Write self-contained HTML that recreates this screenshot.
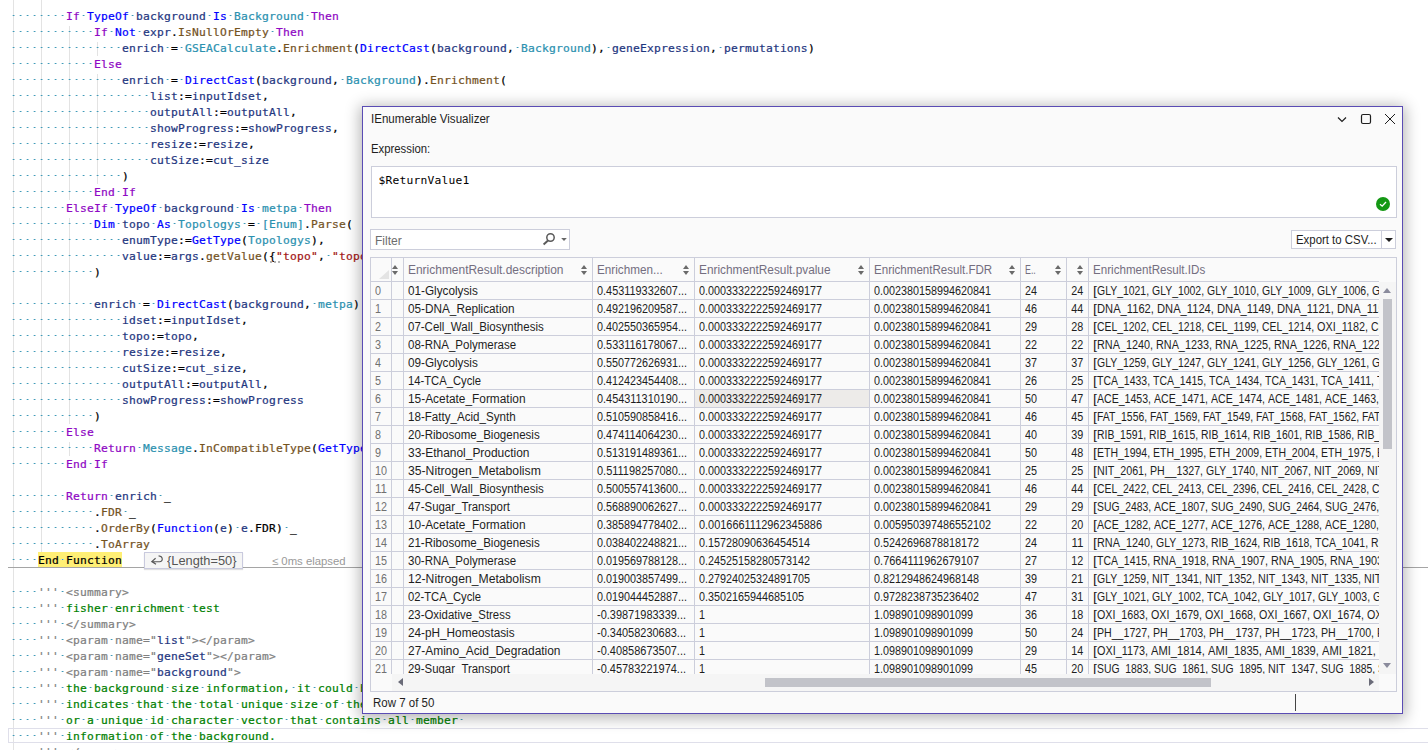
<!DOCTYPE html>
<html lang="en"><head><meta charset="utf-8"><title>IEnumerable Visualizer</title>
<style>
*{box-sizing:border-box}
html,body{margin:0;padding:0}
body{width:1428px;height:750px;overflow:hidden;background:#fff;position:relative;font-family:"Liberation Sans",sans-serif;font-size:12px;color:#1e1e1e}
#ed{position:absolute;left:0;top:0;width:1428px;height:750px;overflow:hidden;background:#fff}
.gd{position:absolute;width:1px;background:#e3e3e3}
#code{position:absolute;left:10px;top:9px;font-family:"DejaVu Sans Mono","Liberation Mono",monospace;font-size:11.3px;letter-spacing:.1968px;line-height:16px;color:#000;-webkit-text-stroke:.22px}
.ln{height:16px;white-space:pre}
.w{background:linear-gradient(90deg,transparent 2px,#c4e0ea 2px,#c4e0ea 3px,#3f9bb8 3px,#3f9bb8 4px,#a3cfde 4px,#a3cfde 5px,transparent 5px) 0 5px/7px 1px repeat-x}
.c{color:#8f08c4}.k{color:#0000ff}.t{color:#2b91af}.m{color:#74531f}.v{color:#1f377f}.s{color:#a31515}
.g{color:#808080}.d{color:#008000}.q{color:#74531f}.bk{color:#000}
.hl{color:#000}
#hl{position:absolute;left:38px;top:552px;width:84px;height:15px;background:#ffef75}
#sep{position:absolute;left:8px;right:0;top:567px;height:1px;background:#a5a5a5}
#cur{position:absolute;left:8px;right:-2px;top:728px;height:15px;border:1px solid #dfdfea}
#tip{position:absolute;left:144px;top:552px;width:99px;height:17px;border:1px solid #c9cade;background:#f5f5f5;color:#555;white-space:nowrap;box-shadow:0 1px 1px rgba(0,0,0,.12)}
#tip svg{position:absolute;left:5px;top:1px}
#tip .tx{position:absolute;left:22px;top:0px;font-size:13px;line-height:16px}
#el{position:absolute;left:272px;top:553px;color:#9a9a9a;font-size:11px;line-height:16px;white-space:nowrap}

#dlg{position:absolute;left:362px;top:106px;width:1041px;height:608px;background:#fafafa;border:1px solid #5a4cb4;box-shadow:0 2px 14px 2px rgba(0,0,0,.30)}
#dlg .abs{position:absolute}
#title{left:8px;top:5px;line-height:14px;white-space:nowrap;color:#1e1e1e}
#expl{left:8px;top:35px;line-height:14px;white-space:nowrap}
#expr{left:8px;top:59px;width:1026px;height:52px;background:#fff;border:1px solid #cccedb}
#expr .tx{position:absolute;left:6.5px;top:7px;font-family:"DejaVu Sans Mono","Liberation Mono",monospace;font-size:11.3px;letter-spacing:.1968px;line-height:14px;color:#000}
#ok{position:absolute;left:1004px;top:30px;width:14px;height:14px}
#filter{left:7px;top:122px;width:200px;height:21px;background:#fff;border:1px solid #cccedb}
#filter .tx{position:absolute;left:3.5px;top:3.5px;line-height:15px;color:#6d6d6d}
#filter svg{position:absolute;left:170px;top:2px}
#export{left:928px;top:123px;width:105px;height:19px;background:#fff;border:1px solid #cccedb}
#export .tx{position:absolute;left:4px;top:2px;line-height:15px;color:#1e1e1e;white-space:nowrap}
#export .dv{position:absolute;left:89px;top:0;width:1px;height:17px;background:#cccedb}
#export .ar{position:absolute;left:93px;top:7px;width:0;height:0;border-left:4px solid transparent;border-right:4px solid transparent;border-top:4px solid #1e1e1e}

#tbl{left:7px;top:150px;width:1027px;height:435px;border:1px solid #cccedb;background:#fafafa;overflow:hidden}
#grid{position:absolute;left:0;top:0;width:1008px;height:416px;overflow:hidden}
.hc{position:absolute;top:0;height:24px;border-right:1px solid #cccedb;border-bottom:1px solid #cccedb;color:#746e80;overflow:hidden;white-space:nowrap}
.hc .ht{position:absolute;left:4px;top:5px;line-height:15px}
.sort{position:absolute;right:4px;top:7px;width:7px;height:10px}
.sort:before{content:"";position:absolute;left:0;top:0;border-left:3.5px solid transparent;border-right:3.5px solid transparent;border-bottom:4px solid #6a6a6a}
.sort:after{content:"";position:absolute;left:0;top:6px;border-left:3.5px solid transparent;border-right:3.5px solid transparent;border-top:4px solid #6a6a6a}
.corner{position:absolute;left:8px;top:12px;width:0;height:0;border-left:10px solid transparent;border-bottom:9px solid #e4e4e4}
.row{position:absolute;left:0;width:1026px;height:18px}
.cell{position:absolute;top:0;height:18px;border-right:1px solid #cccedb;border-bottom:1px solid #cccedb;overflow:hidden;white-space:nowrap;color:#1e1e1e}
.ct{position:absolute;left:4px;top:2px;line-height:15px;white-space:pre}
.f{display:inline-block;transform-origin:0 50%;white-space:pre}
.it{display:inline-block;white-space:pre;vertical-align:top}
.c0{color:#717171}
.c0 .ct{left:4px}
.c7 .ct{left:auto;right:5px}
.sel{background:#edebe9}
#vsb{position:absolute;left:1008px;top:24px;width:17px;height:392px;background:#f5f5f5}
#vsb .th{position:absolute;left:4px;top:17px;width:9px;height:150px;background:#c2c3c9}
.tri{position:absolute;width:0;height:0}
#hsb{position:absolute;left:21px;top:416px;width:987px;height:17px;background:#f5f5f5}
#hsb .th{position:absolute;left:373px;top:4px;width:446px;height:9px;background:#c2c3c9}
#status{left:9.5px;top:589px;line-height:15px;white-space:nowrap}
#caret{left:932px;top:587px;width:1px;height:17px;background:#444}

#sug{position:absolute;left:270px;top:261px;width:10px;height:2px;background:linear-gradient(90deg,#b4b4b4 2px,transparent 2px) 0 0/4px 2px repeat-x;z-index:3}

</style></head>
<body>
<div id="ed">
<div class="gd" style="left:13px;top:0;height:750px"></div>
<div class="gd" style="left:41px;top:0;height:552px"></div>
<div class="gd" style="left:69px;top:26px;height:174px"></div>
<div class="gd" style="left:69px;top:218px;height:206px"></div>
<div class="gd" style="left:69px;top:442px;height:14px"></div>
<div class="gd" style="left:97px;top:42px;height:14px"></div>
<div class="gd" style="left:97px;top:74px;height:110px"></div>
<div id="sep"></div>
<div id="hl"></div>
<div id="sug"></div>
<div id="cur"></div>
<div id="code">
<div class="ln"><span class="w">        </span><span class="c">If</span><span class="w"> </span><span class="k">TypeOf</span><span class="w"> </span><span class="v">background</span><span class="w"> </span><span class="k">Is</span><span class="w"> </span><span class="t">Background</span><span class="w"> </span><span class="c">Then</span></div>
<div class="ln"><span class="w">            </span><span class="c">If</span><span class="w"> </span><span class="k">Not</span><span class="w"> </span><span class="v">expr</span>.<span class="m">IsNullOrEmpty</span><span class="w"> </span><span class="c">Then</span></div>
<div class="ln"><span class="w">                </span><span class="v">enrich</span><span class="w"> </span>=<span class="w"> </span><span class="t">GSEACalculate</span>.<span class="m">Enrichment</span>(<span class="k">DirectCast</span>(<span class="v">background</span>,<span class="w"> </span><span class="t">Background</span>),<span class="w"> </span><span class="v">geneExpression</span>,<span class="w"> </span><span class="v">permutations</span>)</div>
<div class="ln"><span class="w">            </span><span class="c">Else</span></div>
<div class="ln"><span class="w">                </span><span class="v">enrich</span><span class="w"> </span>=<span class="w"> </span><span class="k">DirectCast</span>(<span class="v">background</span>,<span class="w"> </span><span class="t">Background</span>).<span class="m">Enrichment</span>(</div>
<div class="ln"><span class="w">                    </span><span class="v">list</span>:=<span class="v">inputIdset</span>,</div>
<div class="ln"><span class="w">                    </span><span class="v">outputAll</span>:=<span class="v">outputAll</span>,</div>
<div class="ln"><span class="w">                    </span><span class="v">showProgress</span>:=<span class="v">showProgress</span>,</div>
<div class="ln"><span class="w">                    </span><span class="v">resize</span>:=<span class="v">resize</span>,</div>
<div class="ln"><span class="w">                    </span><span class="v">cutSize</span>:=<span class="v">cut_size</span></div>
<div class="ln"><span class="w">                </span>)</div>
<div class="ln"><span class="w">            </span><span class="c">End</span><span class="w"> </span><span class="c">If</span></div>
<div class="ln"><span class="w">        </span><span class="c">ElseIf</span><span class="w"> </span><span class="k">TypeOf</span><span class="w"> </span><span class="v">background</span><span class="w"> </span><span class="k">Is</span><span class="w"> </span><span class="t">metpa</span><span class="w"> </span><span class="c">Then</span></div>
<div class="ln"><span class="w">            </span><span class="k">Dim</span><span class="w"> </span><span class="v">topo</span><span class="w"> </span><span class="k">As</span><span class="w"> </span><span class="t">Topologys</span><span class="w"> </span>=<span class="w"> </span><span class="t">[Enum]</span>.<span class="m">Parse</span>(</div>
<div class="ln"><span class="w">                </span><span class="v">enumType</span>:=<span class="k">GetType</span>(<span class="t">Topologys</span>),</div>
<div class="ln"><span class="w">                </span><span class="v">value</span>:=<span class="v">args</span>.<span class="m">getValue</span>({<span class="s">"topo"</span>,<span class="w"> </span><span class="s">"topology"</span>}),</div>
<div class="ln"><span class="w">            </span>)</div>
<div class="ln"></div>
<div class="ln"><span class="w">            </span><span class="v">enrich</span><span class="w"> </span>=<span class="w"> </span><span class="k">DirectCast</span>(<span class="v">background</span>,<span class="w"> </span><span class="t">metpa</span>).<span class="m">Enrichment</span>(</div>
<div class="ln"><span class="w">                </span><span class="v">idset</span>:=<span class="v">inputIdset</span>,</div>
<div class="ln"><span class="w">                </span><span class="v">topo</span>:=<span class="v">topo</span>,</div>
<div class="ln"><span class="w">                </span><span class="v">resize</span>:=<span class="v">resize</span>,</div>
<div class="ln"><span class="w">                </span><span class="v">cutSize</span>:=<span class="v">cut_size</span>,</div>
<div class="ln"><span class="w">                </span><span class="v">outputAll</span>:=<span class="v">outputAll</span>,</div>
<div class="ln"><span class="w">                </span><span class="v">showProgress</span>:=<span class="v">showProgress</span></div>
<div class="ln"><span class="w">            </span>)</div>
<div class="ln"><span class="w">        </span><span class="c">Else</span></div>
<div class="ln"><span class="w">            </span><span class="c">Return</span><span class="w"> </span><span class="t">Message</span>.<span class="m">InCompatibleType</span>(<span class="k">GetType</span>(<span class="t">Background</span>),<span class="w"> </span><span class="v">env</span>)</div>
<div class="ln"><span class="w">        </span><span class="c">End</span><span class="w"> </span><span class="c">If</span></div>
<div class="ln"></div>
<div class="ln"><span class="w">        </span><span class="c">Return</span><span class="w"> </span><span class="v">enrich</span><span class="w"> </span>_</div>
<div class="ln"><span class="w">            </span>.<span class="q">FDR</span><span class="w"> </span>_</div>
<div class="ln"><span class="w">            </span>.<span class="m">OrderBy</span>(<span class="k">Function</span>(<span class="v">e</span>)<span class="w"> </span><span class="v">e</span>.<span class="bk">FDR</span>)<span class="w"> </span>_</div>
<div class="ln"><span class="w">            </span>.<span class="q">ToArray</span></div>
<div class="ln"><span class="w">    </span><span class="hl">End<span class="w"> </span>Function</span></div>
<div class="ln"></div>
<div class="ln"><span class="w">    </span><span class="g">'''</span><span class="w"> </span><span class="g">&lt;summary&gt;</span></div>
<div class="ln"><span class="w">    </span><span class="g">'''</span><span class="w"> </span><span class="d">fisher<span class="w"> </span>enrichment<span class="w"> </span>test</span></div>
<div class="ln"><span class="w">    </span><span class="g">'''</span><span class="w"> </span><span class="g">&lt;/summary&gt;</span></div>
<div class="ln"><span class="w">    </span><span class="g">'''</span><span class="w"> </span><span class="g">&lt;param<span class="w"> </span>name="</span><span class="v">list</span><span class="g">"&gt;&lt;/param&gt;</span></div>
<div class="ln"><span class="w">    </span><span class="g">'''</span><span class="w"> </span><span class="g">&lt;param<span class="w"> </span>name="</span><span class="v">geneSet</span><span class="g">"&gt;&lt;/param&gt;</span></div>
<div class="ln"><span class="w">    </span><span class="g">'''</span><span class="w"> </span><span class="g">&lt;param<span class="w"> </span>name="</span><span class="v">background</span><span class="g">"&gt;</span></div>
<div class="ln"><span class="w">    </span><span class="g">'''</span><span class="w"> </span><span class="d">the<span class="w"> </span>background<span class="w"> </span>size<span class="w"> </span>information,<span class="w"> </span>it<span class="w"> </span>could<span class="w"> </span>be<span class="w"> </span>an<span class="w"> </span>integer<span class="w"> </span>value</span></div>
<div class="ln"><span class="w">    </span><span class="g">'''</span><span class="w"> </span><span class="d">indicates<span class="w"> </span>that<span class="w"> </span>the<span class="w"> </span>total<span class="w"> </span>unique<span class="w"> </span>size<span class="w"> </span>of<span class="w"> </span>the<span class="w"> </span>enrichment<span class="w"> </span>background,</span></div>
<div class="ln"><span class="w">    </span><span class="g">'''</span><span class="w"> </span><span class="d">or<span class="w"> </span>a<span class="w"> </span>unique<span class="w"> </span>id<span class="w"> </span>character<span class="w"> </span>vector<span class="w"> </span>that<span class="w"> </span>contains<span class="w"> </span>all<span class="w"> </span>member<span class="w"> </span></span></div>
<div class="ln"><span class="w">    </span><span class="g">'''</span><span class="w"> </span><span class="d">information<span class="w"> </span>of<span class="w"> </span>the<span class="w"> </span>background.</span></div>
<div class="ln"><span class="w">    </span><span class="g">'''</span><span class="w"> </span><span class="g">&lt;/param&gt;</span></div>
</div>
<div id="tip"><svg width="16" height="14" viewBox="0 0 16 14"><path d="M5.6 4.3 L1.8 7.6 L6 10.2 M2.2 7.7 H9.6 C13.2 7.7 13.4 2.4 8.6 1.9" fill="none" stroke="#555" stroke-width="1.15"/></svg><span class="tx"><span class="f" style="transform:scaleX(0.9858)">{Length=50}</span></span></div>
<div id="el"><span class="f" style="transform:scaleX(1.0298)">≤ 0ms elapsed</span></div>
</div>
<div id="dlg">
<div class="abs" id="title"><span class="f" style="transform:scaleX(0.9636)">IEnumerable Visualizer</span></div>
<svg class="abs" style="left:972px;top:4px" width="64" height="16" viewBox="0 0 64 16"><g fill="none" stroke="#1e1e1e" stroke-width="1.2"><path d="M3 6.5 L7 10.5 L11 6.5"/><rect x="26.5" y="3.5" width="9" height="9" rx="1.5"/><path d="M50 3 L60 13 M60 3 L50 13" stroke-width="1"/></g></svg>
<div class="abs" id="expl"><span class="f" style="transform:scaleX(0.9441)">Expression:</span></div>
<div class="abs" id="expr"><span class="tx">$ReturnValue1</span>
<svg id="ok" viewBox="0 0 14 14"><circle cx="7" cy="7" r="7" fill="#149814"/><path d="M4 7.2 L6.2 9.2 L10 5" fill="none" stroke="#fff" stroke-width="1.3"/></svg>
</div>
<div class="abs" id="filter"><span class="tx"><span class="f" style="transform:scaleX(1.0048)">Filter</span></span>
<svg width="28" height="16" viewBox="0 0 28 16"><circle cx="9.5" cy="5.5" r="3.7" fill="none" stroke="#5a5a5a" stroke-width="1.5"/><path d="M7 8.6 L2.6 12.4" stroke="#5a5a5a" stroke-width="2" fill="none"/><path d="M20.2 6 L25.8 6 L23 9 Z" fill="#666"/></svg>
</div>
<div class="abs" id="export"><span class="tx"><span class="f" style="transform:scaleX(0.9501)">Export to CSV...</span></span><span class="dv"></span><span class="ar"></span></div>
<div class="abs" id="tbl">
<div id="grid">
<div class="hc" style="left:0px;width:21px"><span class="corner"></span></div>
<div class="hc" style="left:21px;width:12px"><span class="sort"></span></div>
<div class="hc" style="left:33px;width:189px"><span class="ht"><span class="f" style="transform:scaleX(0.9963)">EnrichmentResult.description</span></span><span class="sort"></span></div>
<div class="hc" style="left:222px;width:102px"><span class="ht"><span class="f" style="transform:scaleX(0.9754)">Enrichmen...</span></span><span class="sort"></span></div>
<div class="hc" style="left:324px;width:175px"><span class="ht"><span class="f" style="transform:scaleX(0.9857)">EnrichmentResult.pvalue</span></span><span class="sort"></span></div>
<div class="hc" style="left:499px;width:151px"><span class="ht"><span class="f" style="transform:scaleX(0.9633)">EnrichmentResult.FDR</span></span><span class="sort"></span></div>
<div class="hc" style="left:650px;width:46px"><span class="ht"><span class="f" style="transform:scaleX(0.7361)">E..</span></span><span class="sort"></span></div>
<div class="hc" style="left:696px;width:22px"><span class="sort"></span></div>
<div class="hc" style="left:718px;width:308px"><span class="ht"><span class="f" style="transform:scaleX(0.9669)">EnrichmentResult.IDs</span></span></div>
<div class="row" style="top:24px">
<div class="cell c0" style="left:0px;width:21px"><span class="ct"><span class="f" style="transform:scaleX(0.8972)">0</span></span></div>
<div class="cell c1" style="left:21px;width:12px"><span class="ct"></span></div>
<div class="cell c2" style="left:33px;width:189px"><span class="ct"><span class="f" style="transform:scaleX(0.9781)">01-Glycolysis</span></span></div>
<div class="cell c3" style="left:222px;width:102px"><span class="ct"><span class="f" style="transform:scaleX(0.9071)">0.453119332607...</span></span></div>
<div class="cell c4" style="left:324px;width:175px"><span class="ct"><span class="f" style="transform:scaleX(0.8990)">0.0003332222592469177</span></span></div>
<div class="cell c5" style="left:499px;width:151px"><span class="ct"><span class="f" style="transform:scaleX(0.8990)">0.002380158994620841</span></span></div>
<div class="cell c6" style="left:650px;width:46px"><span class="ct"><span class="f" style="transform:scaleX(0.8982)">24</span></span></div>
<div class="cell c7" style="left:696px;width:22px"><span class="ct"><span class="f" style="transform:scaleX(0.8982);transform-origin:100% 50%">24</span></span></div>
<div class="cell c8" style="left:718px;width:308px"><span class="ct"><span class="it" style="width:4px"><span class="f" style="transform:scaleX(1.1963)">[</span></span><span class="it" style="width:55px"><span class="f" style="transform:scaleX(0.8706)">GLY_1021, </span></span><span class="it" style="width:55px"><span class="f" style="transform:scaleX(0.8706)">GLY_1002, </span></span><span class="it" style="width:55px"><span class="f" style="transform:scaleX(0.8706)">GLY_1010, </span></span><span class="it" style="width:55px"><span class="f" style="transform:scaleX(0.8706)">GLY_1009, </span></span><span class="it" style="width:55px"><span class="f" style="transform:scaleX(0.8706)">GLY_1006, </span></span><span class="it" style="width:55px"><span class="f" style="transform:scaleX(0.8706)">GLY_1013, </span></span><span class="it" style="width:55px"><span class="f" style="transform:scaleX(0.8706)">GLY_1003, </span></span></span></div>
</div>
<div class="row" style="top:42px">
<div class="cell c0" style="left:0px;width:21px"><span class="ct"><span class="f" style="transform:scaleX(0.8972)">1</span></span></div>
<div class="cell c1" style="left:21px;width:12px"><span class="ct"></span></div>
<div class="cell c2" style="left:33px;width:189px"><span class="ct"><span class="f" style="transform:scaleX(0.9804)">05-DNA_Replication</span></span></div>
<div class="cell c3" style="left:222px;width:102px"><span class="ct"><span class="f" style="transform:scaleX(0.8990)">0.492196209587...</span></span></div>
<div class="cell c4" style="left:324px;width:175px"><span class="ct"><span class="f" style="transform:scaleX(0.8990)">0.0003332222592469177</span></span></div>
<div class="cell c5" style="left:499px;width:151px"><span class="ct"><span class="f" style="transform:scaleX(0.8990)">0.002380158994620841</span></span></div>
<div class="cell c6" style="left:650px;width:46px"><span class="ct"><span class="f" style="transform:scaleX(0.8982)">46</span></span></div>
<div class="cell c7" style="left:696px;width:22px"><span class="ct"><span class="f" style="transform:scaleX(0.8982);transform-origin:100% 50%">44</span></span></div>
<div class="cell c8" style="left:718px;width:308px"><span class="ct"><span class="it" style="width:4px"><span class="f" style="transform:scaleX(1.1963)">[</span></span><span class="it" style="width:60px"><span class="f" style="transform:scaleX(0.9305)">DNA_1162, </span></span><span class="it" style="width:60px"><span class="f" style="transform:scaleX(0.9305)">DNA_1124, </span></span><span class="it" style="width:60px"><span class="f" style="transform:scaleX(0.9305)">DNA_1149, </span></span><span class="it" style="width:60px"><span class="f" style="transform:scaleX(0.9305)">DNA_1121, </span></span><span class="it" style="width:60px"><span class="f" style="transform:scaleX(0.9305)">DNA_1158, </span></span><span class="it" style="width:60px"><span class="f" style="transform:scaleX(0.9305)">DNA_1133, </span></span></span></div>
</div>
<div class="row" style="top:60px">
<div class="cell c0" style="left:0px;width:21px"><span class="ct"><span class="f" style="transform:scaleX(0.8972)">2</span></span></div>
<div class="cell c1" style="left:21px;width:12px"><span class="ct"></span></div>
<div class="cell c2" style="left:33px;width:189px"><span class="ct"><span class="f" style="transform:scaleX(0.9582)">07-Cell_Wall_Biosynthesis</span></span></div>
<div class="cell c3" style="left:222px;width:102px"><span class="ct"><span class="f" style="transform:scaleX(0.8990)">0.402550365954...</span></span></div>
<div class="cell c4" style="left:324px;width:175px"><span class="ct"><span class="f" style="transform:scaleX(0.8990)">0.0003332222592469177</span></span></div>
<div class="cell c5" style="left:499px;width:151px"><span class="ct"><span class="f" style="transform:scaleX(0.8990)">0.002380158994620841</span></span></div>
<div class="cell c6" style="left:650px;width:46px"><span class="ct"><span class="f" style="transform:scaleX(0.8982)">29</span></span></div>
<div class="cell c7" style="left:696px;width:22px"><span class="ct"><span class="f" style="transform:scaleX(0.8982);transform-origin:100% 50%">28</span></span></div>
<div class="cell c8" style="left:718px;width:308px"><span class="ct"><span class="it" style="width:4px"><span class="f" style="transform:scaleX(1.1963)">[</span></span><span class="it" style="width:55px"><span class="f" style="transform:scaleX(0.8676)">CEL_1202, </span></span><span class="it" style="width:55px"><span class="f" style="transform:scaleX(0.8676)">CEL_1218, </span></span><span class="it" style="width:55px"><span class="f" style="transform:scaleX(0.8800)">CEL_1199, </span></span><span class="it" style="width:55px"><span class="f" style="transform:scaleX(0.8676)">CEL_1214, </span></span><span class="it" style="width:54px"><span class="f" style="transform:scaleX(0.9026)">OXI_1182, </span></span><span class="it" style="width:55px"><span class="f" style="transform:scaleX(0.8676)">CEL_1207, </span></span><span class="it" style="width:55px"><span class="f" style="transform:scaleX(0.8800)">CEL_1211, </span></span></span></div>
</div>
<div class="row" style="top:78px">
<div class="cell c0" style="left:0px;width:21px"><span class="ct"><span class="f" style="transform:scaleX(0.8972)">3</span></span></div>
<div class="cell c1" style="left:21px;width:12px"><span class="ct"></span></div>
<div class="cell c2" style="left:33px;width:189px"><span class="ct"><span class="f" style="transform:scaleX(0.9590)">08-RNA_Polymerase</span></span></div>
<div class="cell c3" style="left:222px;width:102px"><span class="ct"><span class="f" style="transform:scaleX(0.9071)">0.533116178067...</span></span></div>
<div class="cell c4" style="left:324px;width:175px"><span class="ct"><span class="f" style="transform:scaleX(0.8990)">0.0003332222592469177</span></span></div>
<div class="cell c5" style="left:499px;width:151px"><span class="ct"><span class="f" style="transform:scaleX(0.8990)">0.002380158994620841</span></span></div>
<div class="cell c6" style="left:650px;width:46px"><span class="ct"><span class="f" style="transform:scaleX(0.8982)">22</span></span></div>
<div class="cell c7" style="left:696px;width:22px"><span class="ct"><span class="f" style="transform:scaleX(0.8982);transform-origin:100% 50%">22</span></span></div>
<div class="cell c8" style="left:718px;width:308px"><span class="ct"><span class="it" style="width:4px"><span class="f" style="transform:scaleX(1.1963)">[</span></span><span class="it" style="width:59px"><span class="f" style="transform:scaleX(0.9025)">RNA_1240, </span></span><span class="it" style="width:59px"><span class="f" style="transform:scaleX(0.9025)">RNA_1233, </span></span><span class="it" style="width:59px"><span class="f" style="transform:scaleX(0.9025)">RNA_1225, </span></span><span class="it" style="width:59px"><span class="f" style="transform:scaleX(0.9025)">RNA_1226, </span></span><span class="it" style="width:59px"><span class="f" style="transform:scaleX(0.9025)">RNA_1229, </span></span><span class="it" style="width:59px"><span class="f" style="transform:scaleX(0.9025)">RNA_1237, </span></span></span></div>
</div>
<div class="row" style="top:96px">
<div class="cell c0" style="left:0px;width:21px"><span class="ct"><span class="f" style="transform:scaleX(0.8972)">4</span></span></div>
<div class="cell c1" style="left:21px;width:12px"><span class="ct"></span></div>
<div class="cell c2" style="left:33px;width:189px"><span class="ct"><span class="f" style="transform:scaleX(0.9781)">09-Glycolysis</span></span></div>
<div class="cell c3" style="left:222px;width:102px"><span class="ct"><span class="f" style="transform:scaleX(0.8990)">0.550772626931...</span></span></div>
<div class="cell c4" style="left:324px;width:175px"><span class="ct"><span class="f" style="transform:scaleX(0.8990)">0.0003332222592469177</span></span></div>
<div class="cell c5" style="left:499px;width:151px"><span class="ct"><span class="f" style="transform:scaleX(0.8990)">0.002380158994620841</span></span></div>
<div class="cell c6" style="left:650px;width:46px"><span class="ct"><span class="f" style="transform:scaleX(0.8982)">37</span></span></div>
<div class="cell c7" style="left:696px;width:22px"><span class="ct"><span class="f" style="transform:scaleX(0.8982);transform-origin:100% 50%">37</span></span></div>
<div class="cell c8" style="left:718px;width:308px"><span class="ct"><span class="it" style="width:4px"><span class="f" style="transform:scaleX(1.1963)">[</span></span><span class="it" style="width:55px"><span class="f" style="transform:scaleX(0.8706)">GLY_1259, </span></span><span class="it" style="width:55px"><span class="f" style="transform:scaleX(0.8706)">GLY_1247, </span></span><span class="it" style="width:55px"><span class="f" style="transform:scaleX(0.8706)">GLY_1241, </span></span><span class="it" style="width:55px"><span class="f" style="transform:scaleX(0.8706)">GLY_1256, </span></span><span class="it" style="width:55px"><span class="f" style="transform:scaleX(0.8706)">GLY_1261, </span></span><span class="it" style="width:55px"><span class="f" style="transform:scaleX(0.8706)">GLY_1250, </span></span><span class="it" style="width:55px"><span class="f" style="transform:scaleX(0.8706)">GLY_1244, </span></span></span></div>
</div>
<div class="row" style="top:114px">
<div class="cell c0" style="left:0px;width:21px"><span class="ct"><span class="f" style="transform:scaleX(0.8972)">5</span></span></div>
<div class="cell c1" style="left:21px;width:12px"><span class="ct"></span></div>
<div class="cell c2" style="left:33px;width:189px"><span class="ct"><span class="f" style="transform:scaleX(0.9368)">14-TCA_Cycle</span></span></div>
<div class="cell c3" style="left:222px;width:102px"><span class="ct"><span class="f" style="transform:scaleX(0.8990)">0.412423454408...</span></span></div>
<div class="cell c4" style="left:324px;width:175px"><span class="ct"><span class="f" style="transform:scaleX(0.8990)">0.0003332222592469177</span></span></div>
<div class="cell c5" style="left:499px;width:151px"><span class="ct"><span class="f" style="transform:scaleX(0.8990)">0.002380158994620841</span></span></div>
<div class="cell c6" style="left:650px;width:46px"><span class="ct"><span class="f" style="transform:scaleX(0.8982)">26</span></span></div>
<div class="cell c7" style="left:696px;width:22px"><span class="ct"><span class="f" style="transform:scaleX(0.8982);transform-origin:100% 50%">25</span></span></div>
<div class="cell c8" style="left:718px;width:308px"><span class="ct"><span class="it" style="width:4px"><span class="f" style="transform:scaleX(1.1963)">[</span></span><span class="it" style="width:56px"><span class="f" style="transform:scaleX(0.8744)">TCA_1433, </span></span><span class="it" style="width:56px"><span class="f" style="transform:scaleX(0.8744)">TCA_1415, </span></span><span class="it" style="width:56px"><span class="f" style="transform:scaleX(0.8744)">TCA_1434, </span></span><span class="it" style="width:56px"><span class="f" style="transform:scaleX(0.8744)">TCA_1431, </span></span><span class="it" style="width:56px"><span class="f" style="transform:scaleX(0.8867)">TCA_1411, </span></span><span class="it" style="width:56px"><span class="f" style="transform:scaleX(0.8744)">TCA_1420, </span></span><span class="it" style="width:56px"><span class="f" style="transform:scaleX(0.8744)">TCA_1428, </span></span></span></div>
</div>
<div class="row" style="top:132px">
<div class="cell c0" style="left:0px;width:21px"><span class="ct"><span class="f" style="transform:scaleX(0.8972)">6</span></span></div>
<div class="cell c1" style="left:21px;width:12px"><span class="ct"></span></div>
<div class="cell c2" style="left:33px;width:189px"><span class="ct"><span class="f" style="transform:scaleX(0.9896)">15-Acetate_Formation</span></span></div>
<div class="cell c3" style="left:222px;width:102px"><span class="ct"><span class="f" style="transform:scaleX(0.9071)">0.454311310190...</span></span></div>
<div class="cell c4 sel" style="left:324px;width:175px"><span class="ct"><span class="f" style="transform:scaleX(0.8990)">0.0003332222592469177</span></span></div>
<div class="cell c5" style="left:499px;width:151px"><span class="ct"><span class="f" style="transform:scaleX(0.8990)">0.002380158994620841</span></span></div>
<div class="cell c6" style="left:650px;width:46px"><span class="ct"><span class="f" style="transform:scaleX(0.8982)">50</span></span></div>
<div class="cell c7" style="left:696px;width:22px"><span class="ct"><span class="f" style="transform:scaleX(0.8982);transform-origin:100% 50%">47</span></span></div>
<div class="cell c8" style="left:718px;width:308px"><span class="ct"><span class="it" style="width:4px"><span class="f" style="transform:scaleX(1.1963)">[</span></span><span class="it" style="width:57px"><span class="f" style="transform:scaleX(0.8807)">ACE_1453, </span></span><span class="it" style="width:57px"><span class="f" style="transform:scaleX(0.8807)">ACE_1471, </span></span><span class="it" style="width:57px"><span class="f" style="transform:scaleX(0.8807)">ACE_1474, </span></span><span class="it" style="width:57px"><span class="f" style="transform:scaleX(0.8807)">ACE_1481, </span></span><span class="it" style="width:57px"><span class="f" style="transform:scaleX(0.8807)">ACE_1463, </span></span><span class="it" style="width:57px"><span class="f" style="transform:scaleX(0.8807)">ACE_1459, </span></span><span class="it" style="width:57px"><span class="f" style="transform:scaleX(0.8807)">ACE_1477, </span></span></span></div>
</div>
<div class="row" style="top:150px">
<div class="cell c0" style="left:0px;width:21px"><span class="ct"><span class="f" style="transform:scaleX(0.8972)">7</span></span></div>
<div class="cell c1" style="left:21px;width:12px"><span class="ct"></span></div>
<div class="cell c2" style="left:33px;width:189px"><span class="ct"><span class="f" style="transform:scaleX(0.9667)">18-Fatty_Acid_Synth</span></span></div>
<div class="cell c3" style="left:222px;width:102px"><span class="ct"><span class="f" style="transform:scaleX(0.8990)">0.510590858416...</span></span></div>
<div class="cell c4" style="left:324px;width:175px"><span class="ct"><span class="f" style="transform:scaleX(0.8990)">0.0003332222592469177</span></span></div>
<div class="cell c5" style="left:499px;width:151px"><span class="ct"><span class="f" style="transform:scaleX(0.8990)">0.002380158994620841</span></span></div>
<div class="cell c6" style="left:650px;width:46px"><span class="ct"><span class="f" style="transform:scaleX(0.8982)">46</span></span></div>
<div class="cell c7" style="left:696px;width:22px"><span class="ct"><span class="f" style="transform:scaleX(0.8982);transform-origin:100% 50%">45</span></span></div>
<div class="cell c8" style="left:718px;width:308px"><span class="ct"><span class="it" style="width:4px"><span class="f" style="transform:scaleX(1.1963)">[</span></span><span class="it" style="width:53px"><span class="f" style="transform:scaleX(0.8666)">FAT_1556, </span></span><span class="it" style="width:53px"><span class="f" style="transform:scaleX(0.8666)">FAT_1569, </span></span><span class="it" style="width:53px"><span class="f" style="transform:scaleX(0.8666)">FAT_1549, </span></span><span class="it" style="width:53px"><span class="f" style="transform:scaleX(0.8666)">FAT_1568, </span></span><span class="it" style="width:53px"><span class="f" style="transform:scaleX(0.8666)">FAT_1562, </span></span><span class="it" style="width:53px"><span class="f" style="transform:scaleX(0.8666)">FAT_1553, </span></span><span class="it" style="width:53px"><span class="f" style="transform:scaleX(0.8666)">FAT_1571, </span></span></span></div>
</div>
<div class="row" style="top:168px">
<div class="cell c0" style="left:0px;width:21px"><span class="ct"><span class="f" style="transform:scaleX(0.8972)">8</span></span></div>
<div class="cell c1" style="left:21px;width:12px"><span class="ct"></span></div>
<div class="cell c2" style="left:33px;width:189px"><span class="ct"><span class="f" style="transform:scaleX(0.9631)">20-Ribosome_Biogenesis</span></span></div>
<div class="cell c3" style="left:222px;width:102px"><span class="ct"><span class="f" style="transform:scaleX(0.9071)">0.474114064230...</span></span></div>
<div class="cell c4" style="left:324px;width:175px"><span class="ct"><span class="f" style="transform:scaleX(0.8990)">0.0003332222592469177</span></span></div>
<div class="cell c5" style="left:499px;width:151px"><span class="ct"><span class="f" style="transform:scaleX(0.8990)">0.002380158994620841</span></span></div>
<div class="cell c6" style="left:650px;width:46px"><span class="ct"><span class="f" style="transform:scaleX(0.8982)">40</span></span></div>
<div class="cell c7" style="left:696px;width:22px"><span class="ct"><span class="f" style="transform:scaleX(0.8982);transform-origin:100% 50%">39</span></span></div>
<div class="cell c8" style="left:718px;width:308px"><span class="ct"><span class="it" style="width:4px"><span class="f" style="transform:scaleX(1.1963)">[</span></span><span class="it" style="width:52px"><span class="f" style="transform:scaleX(0.8660)">RIB_1591, </span></span><span class="it" style="width:52px"><span class="f" style="transform:scaleX(0.8660)">RIB_1615, </span></span><span class="it" style="width:52px"><span class="f" style="transform:scaleX(0.8660)">RIB_1614, </span></span><span class="it" style="width:52px"><span class="f" style="transform:scaleX(0.8660)">RIB_1601, </span></span><span class="it" style="width:52px"><span class="f" style="transform:scaleX(0.8660)">RIB_1586, </span></span><span class="it" style="width:52px"><span class="f" style="transform:scaleX(0.8660)">RIB_1609, </span></span><span class="it" style="width:52px"><span class="f" style="transform:scaleX(0.8660)">RIB_1597, </span></span></span></div>
</div>
<div class="row" style="top:186px">
<div class="cell c0" style="left:0px;width:21px"><span class="ct"><span class="f" style="transform:scaleX(0.8972)">9</span></span></div>
<div class="cell c1" style="left:21px;width:12px"><span class="ct"></span></div>
<div class="cell c2" style="left:33px;width:189px"><span class="ct"><span class="f" style="transform:scaleX(0.9951)">33-Ethanol_Production</span></span></div>
<div class="cell c3" style="left:222px;width:102px"><span class="ct"><span class="f" style="transform:scaleX(0.8990)">0.513191489361...</span></span></div>
<div class="cell c4" style="left:324px;width:175px"><span class="ct"><span class="f" style="transform:scaleX(0.8990)">0.0003332222592469177</span></span></div>
<div class="cell c5" style="left:499px;width:151px"><span class="ct"><span class="f" style="transform:scaleX(0.8990)">0.002380158994620841</span></span></div>
<div class="cell c6" style="left:650px;width:46px"><span class="ct"><span class="f" style="transform:scaleX(0.8982)">50</span></span></div>
<div class="cell c7" style="left:696px;width:22px"><span class="ct"><span class="f" style="transform:scaleX(0.8982);transform-origin:100% 50%">48</span></span></div>
<div class="cell c8" style="left:718px;width:308px"><span class="ct"><span class="it" style="width:4px"><span class="f" style="transform:scaleX(1.1963)">[</span></span><span class="it" style="width:56px"><span class="f" style="transform:scaleX(0.8744)">ETH_1994, </span></span><span class="it" style="width:56px"><span class="f" style="transform:scaleX(0.8744)">ETH_1995, </span></span><span class="it" style="width:56px"><span class="f" style="transform:scaleX(0.8744)">ETH_2009, </span></span><span class="it" style="width:56px"><span class="f" style="transform:scaleX(0.8744)">ETH_2004, </span></span><span class="it" style="width:56px"><span class="f" style="transform:scaleX(0.8744)">ETH_1975, </span></span><span class="it" style="width:56px"><span class="f" style="transform:scaleX(0.8744)">ETH_1988, </span></span><span class="it" style="width:56px"><span class="f" style="transform:scaleX(0.8744)">ETH_2001, </span></span></span></div>
</div>
<div class="row" style="top:204px">
<div class="cell c0" style="left:0px;width:21px"><span class="ct"><span class="f" style="transform:scaleX(0.8982)">10</span></span></div>
<div class="cell c1" style="left:21px;width:12px"><span class="ct"></span></div>
<div class="cell c2" style="left:33px;width:189px"><span class="ct"><span class="f" style="transform:scaleX(1.0158)">35-Nitrogen_Metabolism</span></span></div>
<div class="cell c3" style="left:222px;width:102px"><span class="ct"><span class="f" style="transform:scaleX(0.9153)">0.511198257080...</span></span></div>
<div class="cell c4" style="left:324px;width:175px"><span class="ct"><span class="f" style="transform:scaleX(0.8990)">0.0003332222592469177</span></span></div>
<div class="cell c5" style="left:499px;width:151px"><span class="ct"><span class="f" style="transform:scaleX(0.8990)">0.002380158994620841</span></span></div>
<div class="cell c6" style="left:650px;width:46px"><span class="ct"><span class="f" style="transform:scaleX(0.8982)">25</span></span></div>
<div class="cell c7" style="left:696px;width:22px"><span class="ct"><span class="f" style="transform:scaleX(0.8982);transform-origin:100% 50%">25</span></span></div>
<div class="cell c8" style="left:718px;width:308px"><span class="ct"><span class="it" style="width:4px"><span class="f" style="transform:scaleX(1.1963)">[</span></span><span class="it" style="width:53px"><span class="f" style="transform:scaleX(0.8926)">NIT_2061, </span></span><span class="it" style="width:56px"><span class="f" style="transform:scaleX(0.8834)">PH__1327, </span></span><span class="it" style="width:55px"><span class="f" style="transform:scaleX(0.8706)">GLY_1740, </span></span><span class="it" style="width:53px"><span class="f" style="transform:scaleX(0.8926)">NIT_2067, </span></span><span class="it" style="width:53px"><span class="f" style="transform:scaleX(0.8926)">NIT_2069, </span></span><span class="it" style="width:53px"><span class="f" style="transform:scaleX(0.8926)">NIT_2058, </span></span><span class="it" style="width:53px"><span class="f" style="transform:scaleX(0.8926)">NIT_2072, </span></span></span></div>
</div>
<div class="row" style="top:222px">
<div class="cell c0" style="left:0px;width:21px"><span class="ct"><span class="f" style="transform:scaleX(0.9624)">11</span></span></div>
<div class="cell c1" style="left:21px;width:12px"><span class="ct"></span></div>
<div class="cell c2" style="left:33px;width:189px"><span class="ct"><span class="f" style="transform:scaleX(0.9582)">45-Cell_Wall_Biosynthesis</span></span></div>
<div class="cell c3" style="left:222px;width:102px"><span class="ct"><span class="f" style="transform:scaleX(0.8990)">0.500557413600...</span></span></div>
<div class="cell c4" style="left:324px;width:175px"><span class="ct"><span class="f" style="transform:scaleX(0.8990)">0.0003332222592469177</span></span></div>
<div class="cell c5" style="left:499px;width:151px"><span class="ct"><span class="f" style="transform:scaleX(0.8990)">0.002380158994620841</span></span></div>
<div class="cell c6" style="left:650px;width:46px"><span class="ct"><span class="f" style="transform:scaleX(0.8982)">46</span></span></div>
<div class="cell c7" style="left:696px;width:22px"><span class="ct"><span class="f" style="transform:scaleX(0.8982);transform-origin:100% 50%">44</span></span></div>
<div class="cell c8" style="left:718px;width:308px"><span class="ct"><span class="it" style="width:4px"><span class="f" style="transform:scaleX(1.1963)">[</span></span><span class="it" style="width:55px"><span class="f" style="transform:scaleX(0.8676)">CEL_2422, </span></span><span class="it" style="width:55px"><span class="f" style="transform:scaleX(0.8676)">CEL_2413, </span></span><span class="it" style="width:55px"><span class="f" style="transform:scaleX(0.8676)">CEL_2396, </span></span><span class="it" style="width:55px"><span class="f" style="transform:scaleX(0.8676)">CEL_2416, </span></span><span class="it" style="width:55px"><span class="f" style="transform:scaleX(0.8676)">CEL_2428, </span></span><span class="it" style="width:55px"><span class="f" style="transform:scaleX(0.8676)">CEL_2409, </span></span><span class="it" style="width:55px"><span class="f" style="transform:scaleX(0.8676)">CEL_2401, </span></span></span></div>
</div>
<div class="row" style="top:240px">
<div class="cell c0" style="left:0px;width:21px"><span class="ct"><span class="f" style="transform:scaleX(0.8982)">12</span></span></div>
<div class="cell c1" style="left:21px;width:12px"><span class="ct"></span></div>
<div class="cell c2" style="left:33px;width:189px"><span class="ct"><span class="f" style="transform:scaleX(0.9528)">47-Sugar_Transport</span></span></div>
<div class="cell c3" style="left:222px;width:102px"><span class="ct"><span class="f" style="transform:scaleX(0.8990)">0.568890062627...</span></span></div>
<div class="cell c4" style="left:324px;width:175px"><span class="ct"><span class="f" style="transform:scaleX(0.8990)">0.0003332222592469177</span></span></div>
<div class="cell c5" style="left:499px;width:151px"><span class="ct"><span class="f" style="transform:scaleX(0.8990)">0.002380158994620841</span></span></div>
<div class="cell c6" style="left:650px;width:46px"><span class="ct"><span class="f" style="transform:scaleX(0.8982)">29</span></span></div>
<div class="cell c7" style="left:696px;width:22px"><span class="ct"><span class="f" style="transform:scaleX(0.8982);transform-origin:100% 50%">29</span></span></div>
<div class="cell c8" style="left:718px;width:308px"><span class="ct"><span class="it" style="width:4px"><span class="f" style="transform:scaleX(1.1963)">[</span></span><span class="it" style="width:57px"><span class="f" style="transform:scaleX(0.8630)">SUG_2483, </span></span><span class="it" style="width:57px"><span class="f" style="transform:scaleX(0.8807)">ACE_1807, </span></span><span class="it" style="width:57px"><span class="f" style="transform:scaleX(0.8630)">SUG_2490, </span></span><span class="it" style="width:57px"><span class="f" style="transform:scaleX(0.8630)">SUG_2464, </span></span><span class="it" style="width:57px"><span class="f" style="transform:scaleX(0.8630)">SUG_2476, </span></span><span class="it" style="width:57px"><span class="f" style="transform:scaleX(0.8630)">SUG_2471, </span></span><span class="it" style="width:57px"><span class="f" style="transform:scaleX(0.8630)">SUG_2488, </span></span></span></div>
</div>
<div class="row" style="top:258px">
<div class="cell c0" style="left:0px;width:21px"><span class="ct"><span class="f" style="transform:scaleX(0.8982)">13</span></span></div>
<div class="cell c1" style="left:21px;width:12px"><span class="ct"></span></div>
<div class="cell c2" style="left:33px;width:189px"><span class="ct"><span class="f" style="transform:scaleX(0.9896)">10-Acetate_Formation</span></span></div>
<div class="cell c3" style="left:222px;width:102px"><span class="ct"><span class="f" style="transform:scaleX(0.8990)">0.385894778402...</span></span></div>
<div class="cell c4" style="left:324px;width:175px"><span class="ct"><span class="f" style="transform:scaleX(0.9109)">0.0016661112962345886</span></span></div>
<div class="cell c5" style="left:499px;width:151px"><span class="ct"><span class="f" style="transform:scaleX(0.8990)">0.005950397486552102</span></span></div>
<div class="cell c6" style="left:650px;width:46px"><span class="ct"><span class="f" style="transform:scaleX(0.8982)">22</span></span></div>
<div class="cell c7" style="left:696px;width:22px"><span class="ct"><span class="f" style="transform:scaleX(0.8982);transform-origin:100% 50%">20</span></span></div>
<div class="cell c8" style="left:718px;width:308px"><span class="ct"><span class="it" style="width:4px"><span class="f" style="transform:scaleX(1.1963)">[</span></span><span class="it" style="width:57px"><span class="f" style="transform:scaleX(0.8807)">ACE_1282, </span></span><span class="it" style="width:57px"><span class="f" style="transform:scaleX(0.8807)">ACE_1277, </span></span><span class="it" style="width:57px"><span class="f" style="transform:scaleX(0.8807)">ACE_1276, </span></span><span class="it" style="width:57px"><span class="f" style="transform:scaleX(0.8807)">ACE_1288, </span></span><span class="it" style="width:57px"><span class="f" style="transform:scaleX(0.8807)">ACE_1280, </span></span><span class="it" style="width:57px"><span class="f" style="transform:scaleX(0.8807)">ACE_1291, </span></span><span class="it" style="width:57px"><span class="f" style="transform:scaleX(0.8807)">ACE_1285, </span></span></span></div>
</div>
<div class="row" style="top:276px">
<div class="cell c0" style="left:0px;width:21px"><span class="ct"><span class="f" style="transform:scaleX(0.8982)">14</span></span></div>
<div class="cell c1" style="left:21px;width:12px"><span class="ct"></span></div>
<div class="cell c2" style="left:33px;width:189px"><span class="ct"><span class="f" style="transform:scaleX(0.9631)">21-Ribosome_Biogenesis</span></span></div>
<div class="cell c3" style="left:222px;width:102px"><span class="ct"><span class="f" style="transform:scaleX(0.8990)">0.038402248821...</span></span></div>
<div class="cell c4" style="left:324px;width:175px"><span class="ct"><span class="f" style="transform:scaleX(0.8990)">0.15728090636454514</span></span></div>
<div class="cell c5" style="left:499px;width:151px"><span class="ct"><span class="f" style="transform:scaleX(0.8990)">0.5242696878818172</span></span></div>
<div class="cell c6" style="left:650px;width:46px"><span class="ct"><span class="f" style="transform:scaleX(0.8982)">24</span></span></div>
<div class="cell c7" style="left:696px;width:22px"><span class="ct"><span class="f" style="transform:scaleX(0.9624);transform-origin:100% 50%">11</span></span></div>
<div class="cell c8" style="left:718px;width:308px"><span class="ct"><span class="it" style="width:4px"><span class="f" style="transform:scaleX(1.1963)">[</span></span><span class="it" style="width:59px"><span class="f" style="transform:scaleX(0.9025)">RNA_1240, </span></span><span class="it" style="width:55px"><span class="f" style="transform:scaleX(0.8706)">GLY_1273, </span></span><span class="it" style="width:52px"><span class="f" style="transform:scaleX(0.8660)">RIB_1624, </span></span><span class="it" style="width:52px"><span class="f" style="transform:scaleX(0.8660)">RIB_1618, </span></span><span class="it" style="width:56px"><span class="f" style="transform:scaleX(0.8744)">TCA_1041, </span></span><span class="it" style="width:52px"><span class="f" style="transform:scaleX(0.8660)">RIB_1630, </span></span><span class="it" style="width:52px"><span class="f" style="transform:scaleX(0.8660)">RIB_1627, </span></span></span></div>
</div>
<div class="row" style="top:294px">
<div class="cell c0" style="left:0px;width:21px"><span class="ct"><span class="f" style="transform:scaleX(0.8982)">15</span></span></div>
<div class="cell c1" style="left:21px;width:12px"><span class="ct"></span></div>
<div class="cell c2" style="left:33px;width:189px"><span class="ct"><span class="f" style="transform:scaleX(0.9590)">30-RNA_Polymerase</span></span></div>
<div class="cell c3" style="left:222px;width:102px"><span class="ct"><span class="f" style="transform:scaleX(0.8990)">0.019569788128...</span></span></div>
<div class="cell c4" style="left:324px;width:175px"><span class="ct"><span class="f" style="transform:scaleX(0.8990)">0.24525158280573142</span></span></div>
<div class="cell c5" style="left:499px;width:151px"><span class="ct"><span class="f" style="transform:scaleX(0.9129)">0.7664111962679107</span></span></div>
<div class="cell c6" style="left:650px;width:46px"><span class="ct"><span class="f" style="transform:scaleX(0.8982)">27</span></span></div>
<div class="cell c7" style="left:696px;width:22px"><span class="ct"><span class="f" style="transform:scaleX(0.8982);transform-origin:100% 50%">12</span></span></div>
<div class="cell c8" style="left:718px;width:308px"><span class="ct"><span class="it" style="width:4px"><span class="f" style="transform:scaleX(1.1963)">[</span></span><span class="it" style="width:56px"><span class="f" style="transform:scaleX(0.8744)">TCA_1415, </span></span><span class="it" style="width:59px"><span class="f" style="transform:scaleX(0.9025)">RNA_1918, </span></span><span class="it" style="width:59px"><span class="f" style="transform:scaleX(0.9025)">RNA_1907, </span></span><span class="it" style="width:59px"><span class="f" style="transform:scaleX(0.9025)">RNA_1905, </span></span><span class="it" style="width:59px"><span class="f" style="transform:scaleX(0.9025)">RNA_1903, </span></span><span class="it" style="width:59px"><span class="f" style="transform:scaleX(0.9150)">RNA_1911, </span></span><span class="it" style="width:59px"><span class="f" style="transform:scaleX(0.9025)">RNA_1915, </span></span></span></div>
</div>
<div class="row" style="top:312px">
<div class="cell c0" style="left:0px;width:21px"><span class="ct"><span class="f" style="transform:scaleX(0.8982)">16</span></span></div>
<div class="cell c1" style="left:21px;width:12px"><span class="ct"></span></div>
<div class="cell c2" style="left:33px;width:189px"><span class="ct"><span class="f" style="transform:scaleX(1.0158)">12-Nitrogen_Metabolism</span></span></div>
<div class="cell c3" style="left:222px;width:102px"><span class="ct"><span class="f" style="transform:scaleX(0.8990)">0.019003857499...</span></span></div>
<div class="cell c4" style="left:324px;width:175px"><span class="ct"><span class="f" style="transform:scaleX(0.8990)">0.27924025324891705</span></span></div>
<div class="cell c5" style="left:499px;width:151px"><span class="ct"><span class="f" style="transform:scaleX(0.8990)">0.8212948624968148</span></span></div>
<div class="cell c6" style="left:650px;width:46px"><span class="ct"><span class="f" style="transform:scaleX(0.8982)">39</span></span></div>
<div class="cell c7" style="left:696px;width:22px"><span class="ct"><span class="f" style="transform:scaleX(0.8982);transform-origin:100% 50%">21</span></span></div>
<div class="cell c8" style="left:718px;width:308px"><span class="ct"><span class="it" style="width:4px"><span class="f" style="transform:scaleX(1.1963)">[</span></span><span class="it" style="width:55px"><span class="f" style="transform:scaleX(0.8706)">GLY_1259, </span></span><span class="it" style="width:53px"><span class="f" style="transform:scaleX(0.8926)">NIT_1341, </span></span><span class="it" style="width:53px"><span class="f" style="transform:scaleX(0.8926)">NIT_1352, </span></span><span class="it" style="width:53px"><span class="f" style="transform:scaleX(0.8926)">NIT_1343, </span></span><span class="it" style="width:53px"><span class="f" style="transform:scaleX(0.8926)">NIT_1335, </span></span><span class="it" style="width:53px"><span class="f" style="transform:scaleX(0.8926)">NIT_1348, </span></span><span class="it" style="width:53px"><span class="f" style="transform:scaleX(0.8926)">NIT_1339, </span></span></span></div>
</div>
<div class="row" style="top:330px">
<div class="cell c0" style="left:0px;width:21px"><span class="ct"><span class="f" style="transform:scaleX(0.8982)">17</span></span></div>
<div class="cell c1" style="left:21px;width:12px"><span class="ct"></span></div>
<div class="cell c2" style="left:33px;width:189px"><span class="ct"><span class="f" style="transform:scaleX(0.9368)">02-TCA_Cycle</span></span></div>
<div class="cell c3" style="left:222px;width:102px"><span class="ct"><span class="f" style="transform:scaleX(0.8990)">0.019044452887...</span></span></div>
<div class="cell c4" style="left:324px;width:175px"><span class="ct"><span class="f" style="transform:scaleX(0.8990)">0.3502165944685105</span></span></div>
<div class="cell c5" style="left:499px;width:151px"><span class="ct"><span class="f" style="transform:scaleX(0.8990)">0.9728238735236402</span></span></div>
<div class="cell c6" style="left:650px;width:46px"><span class="ct"><span class="f" style="transform:scaleX(0.8982)">47</span></span></div>
<div class="cell c7" style="left:696px;width:22px"><span class="ct"><span class="f" style="transform:scaleX(0.8982);transform-origin:100% 50%">31</span></span></div>
<div class="cell c8" style="left:718px;width:308px"><span class="ct"><span class="it" style="width:4px"><span class="f" style="transform:scaleX(1.1963)">[</span></span><span class="it" style="width:55px"><span class="f" style="transform:scaleX(0.8706)">GLY_1021, </span></span><span class="it" style="width:55px"><span class="f" style="transform:scaleX(0.8706)">GLY_1002, </span></span><span class="it" style="width:56px"><span class="f" style="transform:scaleX(0.8744)">TCA_1042, </span></span><span class="it" style="width:55px"><span class="f" style="transform:scaleX(0.8706)">GLY_1017, </span></span><span class="it" style="width:55px"><span class="f" style="transform:scaleX(0.8706)">GLY_1003, </span></span><span class="it" style="width:55px"><span class="f" style="transform:scaleX(0.8706)">GLY_1009, </span></span><span class="it" style="width:56px"><span class="f" style="transform:scaleX(0.8744)">TCA_1038, </span></span></span></div>
</div>
<div class="row" style="top:348px">
<div class="cell c0" style="left:0px;width:21px"><span class="ct"><span class="f" style="transform:scaleX(0.8982)">18</span></span></div>
<div class="cell c1" style="left:21px;width:12px"><span class="ct"></span></div>
<div class="cell c2" style="left:33px;width:189px"><span class="ct"><span class="f" style="transform:scaleX(0.9496)">23-Oxidative_Stress</span></span></div>
<div class="cell c3" style="left:222px;width:102px"><span class="ct"><span class="f" style="transform:scaleX(0.9136)">-0.39871983339...</span></span></div>
<div class="cell c4" style="left:324px;width:175px"><span class="ct"><span class="f" style="transform:scaleX(0.8972)">1</span></span></div>
<div class="cell c5" style="left:499px;width:151px"><span class="ct"><span class="f" style="transform:scaleX(0.8990)">1.098901098901099</span></span></div>
<div class="cell c6" style="left:650px;width:46px"><span class="ct"><span class="f" style="transform:scaleX(0.8982)">36</span></span></div>
<div class="cell c7" style="left:696px;width:22px"><span class="ct"><span class="f" style="transform:scaleX(0.8982);transform-origin:100% 50%">18</span></span></div>
<div class="cell c8" style="left:718px;width:308px"><span class="ct"><span class="it" style="width:4px"><span class="f" style="transform:scaleX(1.1963)">[</span></span><span class="it" style="width:54px"><span class="f" style="transform:scaleX(0.8893)">OXI_1683, </span></span><span class="it" style="width:54px"><span class="f" style="transform:scaleX(0.8893)">OXI_1679, </span></span><span class="it" style="width:54px"><span class="f" style="transform:scaleX(0.8893)">OXI_1668, </span></span><span class="it" style="width:54px"><span class="f" style="transform:scaleX(0.8893)">OXI_1667, </span></span><span class="it" style="width:54px"><span class="f" style="transform:scaleX(0.8893)">OXI_1674, </span></span><span class="it" style="width:54px"><span class="f" style="transform:scaleX(0.8893)">OXI_1671, </span></span><span class="it" style="width:54px"><span class="f" style="transform:scaleX(0.8893)">OXI_1686, </span></span></span></div>
</div>
<div class="row" style="top:366px">
<div class="cell c0" style="left:0px;width:21px"><span class="ct"><span class="f" style="transform:scaleX(0.8982)">19</span></span></div>
<div class="cell c1" style="left:21px;width:12px"><span class="ct"></span></div>
<div class="cell c2" style="left:33px;width:189px"><span class="ct"><span class="f" style="transform:scaleX(0.9805)">24-pH_Homeostasis</span></span></div>
<div class="cell c3" style="left:222px;width:102px"><span class="ct"><span class="f" style="transform:scaleX(0.9136)">-0.34058230683...</span></span></div>
<div class="cell c4" style="left:324px;width:175px"><span class="ct"><span class="f" style="transform:scaleX(0.8972)">1</span></span></div>
<div class="cell c5" style="left:499px;width:151px"><span class="ct"><span class="f" style="transform:scaleX(0.8990)">1.098901098901099</span></span></div>
<div class="cell c6" style="left:650px;width:46px"><span class="ct"><span class="f" style="transform:scaleX(0.8982)">50</span></span></div>
<div class="cell c7" style="left:696px;width:22px"><span class="ct"><span class="f" style="transform:scaleX(0.8982);transform-origin:100% 50%">24</span></span></div>
<div class="cell c8" style="left:718px;width:308px"><span class="ct"><span class="it" style="width:4px"><span class="f" style="transform:scaleX(1.1963)">[</span></span><span class="it" style="width:56px"><span class="f" style="transform:scaleX(0.8834)">PH__1727, </span></span><span class="it" style="width:56px"><span class="f" style="transform:scaleX(0.8834)">PH__1703, </span></span><span class="it" style="width:56px"><span class="f" style="transform:scaleX(0.8834)">PH__1737, </span></span><span class="it" style="width:56px"><span class="f" style="transform:scaleX(0.8834)">PH__1723, </span></span><span class="it" style="width:56px"><span class="f" style="transform:scaleX(0.8834)">PH__1700, </span></span><span class="it" style="width:56px"><span class="f" style="transform:scaleX(0.8960)">PH__1711, </span></span><span class="it" style="width:56px"><span class="f" style="transform:scaleX(0.8834)">PH__1731, </span></span></span></div>
</div>
<div class="row" style="top:384px">
<div class="cell c0" style="left:0px;width:21px"><span class="ct"><span class="f" style="transform:scaleX(0.8982)">20</span></span></div>
<div class="cell c1" style="left:21px;width:12px"><span class="ct"></span></div>
<div class="cell c2" style="left:33px;width:189px"><span class="ct"><span class="f" style="transform:scaleX(0.9939)">27-Amino_Acid_Degradation</span></span></div>
<div class="cell c3" style="left:222px;width:102px"><span class="ct"><span class="f" style="transform:scaleX(0.9136)">-0.40858673507...</span></span></div>
<div class="cell c4" style="left:324px;width:175px"><span class="ct"><span class="f" style="transform:scaleX(0.8972)">1</span></span></div>
<div class="cell c5" style="left:499px;width:151px"><span class="ct"><span class="f" style="transform:scaleX(0.8990)">1.098901098901099</span></span></div>
<div class="cell c6" style="left:650px;width:46px"><span class="ct"><span class="f" style="transform:scaleX(0.8982)">29</span></span></div>
<div class="cell c7" style="left:696px;width:22px"><span class="ct"><span class="f" style="transform:scaleX(0.8982);transform-origin:100% 50%">14</span></span></div>
<div class="cell c8" style="left:718px;width:308px"><span class="ct"><span class="it" style="width:4px"><span class="f" style="transform:scaleX(1.1963)">[</span></span><span class="it" style="width:54px"><span class="f" style="transform:scaleX(0.9026)">OXI_1173, </span></span><span class="it" style="width:57px"><span class="f" style="transform:scaleX(0.9287)">AMI_1814, </span></span><span class="it" style="width:57px"><span class="f" style="transform:scaleX(0.9287)">AMI_1835, </span></span><span class="it" style="width:57px"><span class="f" style="transform:scaleX(0.9287)">AMI_1839, </span></span><span class="it" style="width:57px"><span class="f" style="transform:scaleX(0.9287)">AMI_1821, </span></span><span class="it" style="width:57px"><span class="f" style="transform:scaleX(0.9287)">AMI_1828, </span></span><span class="it" style="width:57px"><span class="f" style="transform:scaleX(0.9287)">AMI_1842, </span></span></span></div>
</div>
<div class="row" style="top:402px">
<div class="cell c0" style="left:0px;width:21px"><span class="ct"><span class="f" style="transform:scaleX(0.8982)">21</span></span></div>
<div class="cell c1" style="left:21px;width:12px"><span class="ct"></span></div>
<div class="cell c2" style="left:33px;width:189px"><span class="ct"><span class="f" style="transform:scaleX(0.9528)">29-Sugar_Transport</span></span></div>
<div class="cell c3" style="left:222px;width:102px"><span class="ct"><span class="f" style="transform:scaleX(0.9136)">-0.45783221974...</span></span></div>
<div class="cell c4" style="left:324px;width:175px"><span class="ct"><span class="f" style="transform:scaleX(0.8972)">1</span></span></div>
<div class="cell c5" style="left:499px;width:151px"><span class="ct"><span class="f" style="transform:scaleX(0.8990)">1.098901098901099</span></span></div>
<div class="cell c6" style="left:650px;width:46px"><span class="ct"><span class="f" style="transform:scaleX(0.8982)">45</span></span></div>
<div class="cell c7" style="left:696px;width:22px"><span class="ct"><span class="f" style="transform:scaleX(0.8982);transform-origin:100% 50%">20</span></span></div>
<div class="cell c8" style="left:718px;width:308px"><span class="ct"><span class="it" style="width:4px"><span class="f" style="transform:scaleX(1.1963)">[</span></span><span class="it" style="width:57px"><span class="f" style="transform:scaleX(0.8630)">SUG_1883, </span></span><span class="it" style="width:57px"><span class="f" style="transform:scaleX(0.8630)">SUG_1861, </span></span><span class="it" style="width:57px"><span class="f" style="transform:scaleX(0.8630)">SUG_1895, </span></span><span class="it" style="width:53px"><span class="f" style="transform:scaleX(0.8926)">NIT_1347, </span></span><span class="it" style="width:57px"><span class="f" style="transform:scaleX(0.8630)">SUG_1885, </span></span><span class="it" style="width:57px"><span class="f" style="transform:scaleX(0.8630)">SUG_1872, </span></span><span class="it" style="width:57px"><span class="f" style="transform:scaleX(0.8630)">SUG_1890, </span></span></span></div>
</div>
</div>
<div id="vsb"><div class="th"></div>
<div class="tri" style="left:4px;top:6px;border-left:4.5px solid transparent;border-right:4.5px solid transparent;border-bottom:5px solid #8a8b9c"></div>
<div class="tri" style="left:4px;top:381px;border-left:4.5px solid transparent;border-right:4.5px solid transparent;border-top:5px solid #8a8b9c"></div>
</div>
<div id="hsb"><div class="th"></div>
<div class="tri" style="left:6px;top:4px;border-top:4.5px solid transparent;border-bottom:4.5px solid transparent;border-right:5px solid #6a6b78"></div>
<div class="tri" style="left:977px;top:4px;border-top:4.5px solid transparent;border-bottom:4.5px solid transparent;border-left:5px solid #6a6b78"></div>
</div>
</div>
<div class="abs" id="status"><span class="f" style="transform:scaleX(0.9571)">Row 7 of 50</span></div>
<div class="abs" id="caret"></div>
</div>

</body></html>
